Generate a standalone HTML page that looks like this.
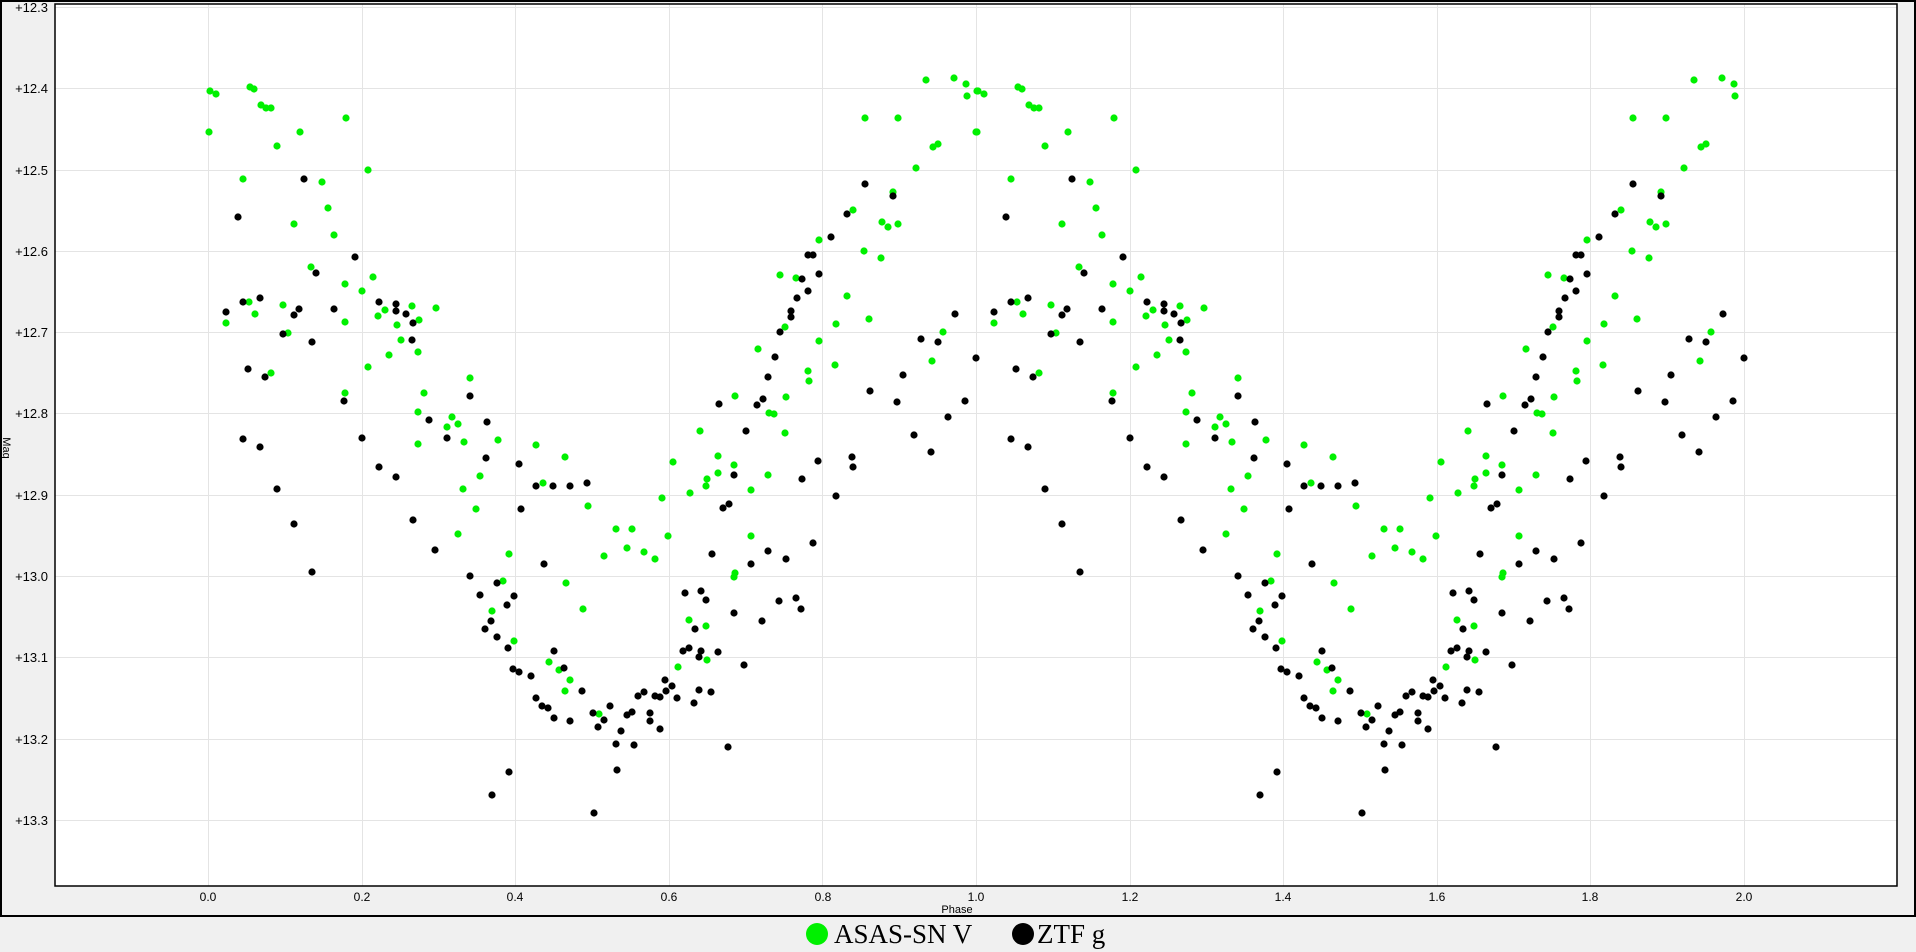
<!DOCTYPE html>
<html><head><meta charset="utf-8"><style>
html,body{margin:0;padding:0;background:#f0f0f0;width:1916px;height:952px;overflow:hidden}
svg{display:block}
.t{font-family:"Liberation Sans",sans-serif;font-size:13px;fill:#000}
.lg{font-family:"Liberation Serif",serif;font-size:27px;fill:#000}
</style></head><body>
<svg width="1916" height="952" viewBox="0 0 1916 952">
<rect x="0" y="0" width="1916" height="952" fill="#f0f0f0"/>
<rect x="1" y="1" width="1914" height="915" fill="none" stroke="#000" stroke-width="2"/>
<rect x="55" y="4" width="1842" height="882" fill="#fff"/>
<g stroke="#e4e4e4" stroke-width="1">
<line x1="208.5" y1="4" x2="208.5" y2="886"/><line x1="362.5" y1="4" x2="362.5" y2="886"/><line x1="515.5" y1="4" x2="515.5" y2="886"/><line x1="669.5" y1="4" x2="669.5" y2="886"/><line x1="822.5" y1="4" x2="822.5" y2="886"/><line x1="976.5" y1="4" x2="976.5" y2="886"/><line x1="1130.5" y1="4" x2="1130.5" y2="886"/><line x1="1283.5" y1="4" x2="1283.5" y2="886"/><line x1="1437.5" y1="4" x2="1437.5" y2="886"/><line x1="1590.5" y1="4" x2="1590.5" y2="886"/><line x1="1744.5" y1="4" x2="1744.5" y2="886"/>
<line x1="55" y1="7.5" x2="1897" y2="7.5"/><line x1="55" y1="88.5" x2="1897" y2="88.5"/><line x1="55" y1="170.5" x2="1897" y2="170.5"/><line x1="55" y1="251.5" x2="1897" y2="251.5"/><line x1="55" y1="332.5" x2="1897" y2="332.5"/><line x1="55" y1="413.5" x2="1897" y2="413.5"/><line x1="55" y1="495.5" x2="1897" y2="495.5"/><line x1="55" y1="576.5" x2="1897" y2="576.5"/><line x1="55" y1="657.5" x2="1897" y2="657.5"/><line x1="55" y1="739.5" x2="1897" y2="739.5"/><line x1="55" y1="820.5" x2="1897" y2="820.5"/>
</g>
<defs>
<g id="cyc">
<g fill="#00f000">
<circle cx="210" cy="91" r="3.6"/><circle cx="216" cy="94" r="3.6"/><circle cx="250" cy="87" r="3.6"/><circle cx="254" cy="89" r="3.6"/><circle cx="261" cy="105" r="3.6"/><circle cx="266" cy="108" r="3.6"/><circle cx="271" cy="108" r="3.6"/><circle cx="346" cy="118" r="3.6"/><circle cx="209" cy="132" r="3.6"/><circle cx="300" cy="132" r="3.6"/><circle cx="277" cy="146" r="3.6"/><circle cx="368" cy="170" r="3.6"/><circle cx="243" cy="179" r="3.6"/><circle cx="322" cy="182" r="3.6"/><circle cx="328" cy="208" r="3.6"/><circle cx="294" cy="224" r="3.6"/><circle cx="334" cy="235" r="3.6"/><circle cx="311" cy="267" r="3.6"/><circle cx="373" cy="277" r="3.6"/><circle cx="345" cy="284" r="3.6"/><circle cx="362" cy="291" r="3.6"/><circle cx="249" cy="302" r="3.6"/><circle cx="283" cy="305" r="3.6"/><circle cx="412" cy="306" r="3.6"/><circle cx="436" cy="308" r="3.6"/><circle cx="385" cy="310" r="3.6"/><circle cx="378" cy="316" r="3.6"/><circle cx="255" cy="314" r="3.6"/><circle cx="226" cy="323" r="3.6"/><circle cx="345" cy="322" r="3.6"/><circle cx="419" cy="320" r="3.6"/><circle cx="397" cy="325" r="3.6"/><circle cx="288" cy="333" r="3.6"/><circle cx="401" cy="340" r="3.6"/><circle cx="418" cy="352" r="3.6"/><circle cx="389" cy="355" r="3.6"/><circle cx="368" cy="367" r="3.6"/><circle cx="271" cy="373" r="3.6"/><circle cx="470" cy="378" r="3.6"/><circle cx="345" cy="393" r="3.6"/><circle cx="424" cy="393" r="3.6"/><circle cx="418" cy="412" r="3.6"/><circle cx="452" cy="417" r="3.6"/><circle cx="447" cy="427" r="3.6"/><circle cx="458" cy="424" r="3.6"/><circle cx="464" cy="442" r="3.6"/><circle cx="418" cy="444" r="3.6"/><circle cx="498" cy="440" r="3.6"/><circle cx="536" cy="445" r="3.6"/><circle cx="565" cy="457" r="3.6"/>
<circle cx="480" cy="476" r="3.6"/><circle cx="463" cy="489" r="3.6"/><circle cx="543" cy="483" r="3.6"/><circle cx="588" cy="506" r="3.6"/><circle cx="476" cy="509" r="3.6"/><circle cx="458" cy="534" r="3.6"/><circle cx="509" cy="554" r="3.6"/><circle cx="503" cy="581" r="3.6"/><circle cx="566" cy="583" r="3.6"/><circle cx="583" cy="609" r="3.6"/><circle cx="492" cy="611" r="3.6"/><circle cx="514" cy="641" r="3.6"/><circle cx="549" cy="662" r="3.6"/><circle cx="559" cy="670" r="3.6"/><circle cx="570" cy="680" r="3.6"/><circle cx="565" cy="691" r="3.6"/><circle cx="599" cy="714" r="3.6"/>
<circle cx="700" cy="431" r="3.6"/><circle cx="785" cy="433" r="3.6"/><circle cx="673" cy="462" r="3.6"/><circle cx="718" cy="456" r="3.6"/><circle cx="734" cy="465" r="3.6"/><circle cx="718" cy="473" r="3.6"/><circle cx="707" cy="479" r="3.6"/><circle cx="706" cy="486" r="3.6"/><circle cx="690" cy="493" r="3.6"/><circle cx="751" cy="490" r="3.6"/><circle cx="768" cy="475" r="3.6"/><circle cx="662" cy="498" r="3.6"/><circle cx="616" cy="529" r="3.6"/><circle cx="632" cy="529" r="3.6"/><circle cx="668" cy="536" r="3.6"/><circle cx="751" cy="536" r="3.6"/><circle cx="627" cy="548" r="3.6"/><circle cx="644" cy="552" r="3.6"/><circle cx="604" cy="556" r="3.6"/><circle cx="655" cy="559" r="3.6"/><circle cx="735" cy="573" r="3.6"/><circle cx="734" cy="577" r="3.6"/><circle cx="689" cy="620" r="3.6"/><circle cx="706" cy="626" r="3.6"/><circle cx="707" cy="660" r="3.6"/><circle cx="678" cy="667" r="3.6"/>
<circle cx="926" cy="80" r="3.6"/><circle cx="954" cy="78" r="3.6"/><circle cx="966" cy="84" r="3.6"/><circle cx="967" cy="96" r="3.6"/><circle cx="865" cy="118" r="3.6"/><circle cx="898" cy="118" r="3.6"/><circle cx="933" cy="147" r="3.6"/><circle cx="938" cy="144" r="3.6"/><circle cx="916" cy="168" r="3.6"/><circle cx="893" cy="192" r="3.6"/><circle cx="853" cy="210" r="3.6"/><circle cx="882" cy="222" r="3.6"/><circle cx="888" cy="227" r="3.6"/><circle cx="898" cy="224" r="3.6"/><circle cx="819" cy="240" r="3.6"/><circle cx="864" cy="251" r="3.6"/><circle cx="881" cy="258" r="3.6"/><circle cx="780" cy="275" r="3.6"/><circle cx="796" cy="278" r="3.6"/><circle cx="847" cy="296" r="3.6"/><circle cx="869" cy="319" r="3.6"/><circle cx="836" cy="324" r="3.6"/><circle cx="785" cy="327" r="3.6"/><circle cx="943" cy="332" r="3.6"/><circle cx="819" cy="341" r="3.6"/><circle cx="758" cy="349" r="3.6"/><circle cx="932" cy="361" r="3.6"/><circle cx="835" cy="365" r="3.6"/><circle cx="808" cy="371" r="3.6"/><circle cx="809" cy="381" r="3.6"/><circle cx="735" cy="396" r="3.6"/><circle cx="786" cy="397" r="3.6"/><circle cx="769" cy="413" r="3.6"/><circle cx="774" cy="414" r="3.6"/>
</g>
<g fill="#000">
<circle cx="304" cy="179" r="3.6"/><circle cx="238" cy="217" r="3.6"/><circle cx="355" cy="257" r="3.6"/><circle cx="316" cy="273" r="3.6"/><circle cx="243" cy="302" r="3.6"/><circle cx="260" cy="298" r="3.6"/><circle cx="226" cy="312" r="3.6"/><circle cx="294" cy="315" r="3.6"/><circle cx="299" cy="309" r="3.6"/><circle cx="334" cy="309" r="3.6"/><circle cx="379" cy="302" r="3.6"/><circle cx="396" cy="304" r="3.6"/><circle cx="396" cy="311" r="3.6"/><circle cx="406" cy="314" r="3.6"/><circle cx="413" cy="323" r="3.6"/><circle cx="283" cy="334" r="3.6"/><circle cx="312" cy="342" r="3.6"/><circle cx="412" cy="340" r="3.6"/><circle cx="248" cy="369" r="3.6"/><circle cx="265" cy="377" r="3.6"/><circle cx="470" cy="396" r="3.6"/><circle cx="344" cy="401" r="3.6"/><circle cx="429" cy="420" r="3.6"/><circle cx="487" cy="422" r="3.6"/><circle cx="447" cy="438" r="3.6"/><circle cx="243" cy="439" r="3.6"/><circle cx="260" cy="447" r="3.6"/><circle cx="362" cy="438" r="3.6"/><circle cx="486" cy="458" r="3.6"/>
<circle cx="379" cy="467" r="3.6"/><circle cx="396" cy="477" r="3.6"/><circle cx="277" cy="489" r="3.6"/><circle cx="519" cy="464" r="3.6"/><circle cx="536" cy="486" r="3.6"/><circle cx="553" cy="486" r="3.6"/><circle cx="570" cy="486" r="3.6"/><circle cx="587" cy="483" r="3.6"/><circle cx="521" cy="509" r="3.6"/><circle cx="294" cy="524" r="3.6"/><circle cx="413" cy="520" r="3.6"/><circle cx="435" cy="550" r="3.6"/><circle cx="544" cy="564" r="3.6"/><circle cx="312" cy="572" r="3.6"/><circle cx="470" cy="576" r="3.6"/><circle cx="497" cy="583" r="3.6"/><circle cx="480" cy="595" r="3.6"/><circle cx="514" cy="596" r="3.6"/><circle cx="507" cy="605" r="3.6"/><circle cx="491" cy="621" r="3.6"/><circle cx="485" cy="629" r="3.6"/><circle cx="497" cy="637" r="3.6"/><circle cx="508" cy="648" r="3.6"/><circle cx="554" cy="651" r="3.6"/><circle cx="513" cy="669" r="3.6"/><circle cx="519" cy="672" r="3.6"/><circle cx="531" cy="676" r="3.6"/><circle cx="564" cy="668" r="3.6"/><circle cx="582" cy="691" r="3.6"/><circle cx="536" cy="698" r="3.6"/><circle cx="542" cy="706" r="3.6"/><circle cx="548" cy="708" r="3.6"/><circle cx="554" cy="718" r="3.6"/><circle cx="570" cy="721" r="3.6"/><circle cx="593" cy="713" r="3.6"/><circle cx="598" cy="727" r="3.6"/><circle cx="509" cy="772" r="3.6"/><circle cx="492" cy="795" r="3.6"/><circle cx="594" cy="813" r="3.6"/>
<circle cx="746" cy="431" r="3.6"/><circle cx="734" cy="475" r="3.6"/><circle cx="818" cy="461" r="3.6"/><circle cx="802" cy="479" r="3.6"/><circle cx="852" cy="457" r="3.6"/><circle cx="853" cy="467" r="3.6"/><circle cx="836" cy="496" r="3.6"/><circle cx="914" cy="435" r="3.6"/><circle cx="931" cy="452" r="3.6"/><circle cx="723" cy="508" r="3.6"/><circle cx="729" cy="504" r="3.6"/><circle cx="712" cy="554" r="3.6"/><circle cx="751" cy="564" r="3.6"/><circle cx="768" cy="551" r="3.6"/><circle cx="786" cy="559" r="3.6"/><circle cx="813" cy="543" r="3.6"/><circle cx="685" cy="593" r="3.6"/><circle cx="701" cy="591" r="3.6"/><circle cx="706" cy="600" r="3.6"/><circle cx="734" cy="613" r="3.6"/><circle cx="762" cy="621" r="3.6"/><circle cx="779" cy="601" r="3.6"/><circle cx="796" cy="598" r="3.6"/><circle cx="801" cy="609" r="3.6"/><circle cx="695" cy="629" r="3.6"/><circle cx="683" cy="651" r="3.6"/><circle cx="689" cy="648" r="3.6"/><circle cx="701" cy="651" r="3.6"/><circle cx="699" cy="657" r="3.6"/><circle cx="718" cy="652" r="3.6"/><circle cx="744" cy="665" r="3.6"/><circle cx="665" cy="680" r="3.6"/><circle cx="672" cy="686" r="3.6"/><circle cx="666" cy="691" r="3.6"/><circle cx="677" cy="698" r="3.6"/><circle cx="699" cy="690" r="3.6"/><circle cx="711" cy="692" r="3.6"/><circle cx="694" cy="703" r="3.6"/><circle cx="638" cy="696" r="3.6"/><circle cx="644" cy="692" r="3.6"/><circle cx="655" cy="696" r="3.6"/><circle cx="660" cy="697" r="3.6"/><circle cx="610" cy="706" r="3.6"/><circle cx="604" cy="720" r="3.6"/><circle cx="627" cy="715" r="3.6"/><circle cx="632" cy="712" r="3.6"/><circle cx="650" cy="713" r="3.6"/><circle cx="650" cy="721" r="3.6"/><circle cx="621" cy="731" r="3.6"/><circle cx="660" cy="729" r="3.6"/><circle cx="616" cy="744" r="3.6"/><circle cx="634" cy="745" r="3.6"/><circle cx="728" cy="747" r="3.6"/><circle cx="617" cy="770" r="3.6"/>
<circle cx="865" cy="184" r="3.6"/><circle cx="893" cy="196" r="3.6"/><circle cx="847" cy="214" r="3.6"/><circle cx="831" cy="237" r="3.6"/><circle cx="808" cy="255" r="3.6"/><circle cx="813" cy="255" r="3.6"/><circle cx="819" cy="274" r="3.6"/><circle cx="802" cy="279" r="3.6"/><circle cx="808" cy="291" r="3.6"/><circle cx="797" cy="298" r="3.6"/><circle cx="791" cy="311" r="3.6"/><circle cx="791" cy="317" r="3.6"/><circle cx="780" cy="332" r="3.6"/><circle cx="775" cy="357" r="3.6"/><circle cx="768" cy="377" r="3.6"/><circle cx="719" cy="404" r="3.6"/><circle cx="757" cy="405" r="3.6"/><circle cx="763" cy="399" r="3.6"/><circle cx="955" cy="314" r="3.6"/><circle cx="921" cy="339" r="3.6"/><circle cx="938" cy="342" r="3.6"/><circle cx="976" cy="358" r="3.6"/><circle cx="903" cy="375" r="3.6"/><circle cx="870" cy="391" r="3.6"/><circle cx="897" cy="402" r="3.6"/><circle cx="965" cy="401" r="3.6"/><circle cx="948" cy="417" r="3.6"/>
</g>
</g>
</defs>
<use href="#cyc"/>
<use href="#cyc" transform="translate(768,0)"/>
<g fill="#00f000"><circle cx="977" cy="91" r="3.6"/><circle cx="976" cy="132" r="3.6"/></g>
<rect x="55" y="4" width="1842" height="882" fill="none" stroke="#000" stroke-width="1.5"/>
<g class="t" text-anchor="end">
<text x="48" y="12">+12.3</text><text x="48" y="93">+12.4</text><text x="48" y="175">+12.5</text><text x="48" y="256">+12.6</text><text x="48" y="337">+12.7</text><text x="48" y="418">+12.8</text><text x="48" y="500">+12.9</text><text x="48" y="581">+13.0</text><text x="48" y="662">+13.1</text><text x="48" y="744">+13.2</text><text x="48" y="825">+13.3</text>
</g>
<g class="t" text-anchor="middle" style="font-size:12px">
<text x="208" y="901">0.0</text><text x="362" y="901">0.2</text><text x="515" y="901">0.4</text><text x="669" y="901">0.6</text><text x="823" y="901">0.8</text><text x="976" y="901">1.0</text><text x="1130" y="901">1.2</text><text x="1283" y="901">1.4</text><text x="1437" y="901">1.6</text><text x="1590" y="901">1.8</text><text x="1744" y="901">2.0</text>
<text x="957" y="913" style="font-size:11px">Phase</text>
</g>
<text class="t" style="font-size:11px" text-anchor="middle" transform="translate(3,448) rotate(90)">Mag</text>
<circle cx="817" cy="934" r="11" fill="#00f000"/>
<text class="lg" x="834" y="943">ASAS-SN V</text>
<circle cx="1023" cy="934" r="11" fill="#000"/>
<text class="lg" x="1037" y="943">ZTF g</text>
</svg>
</body></html>
